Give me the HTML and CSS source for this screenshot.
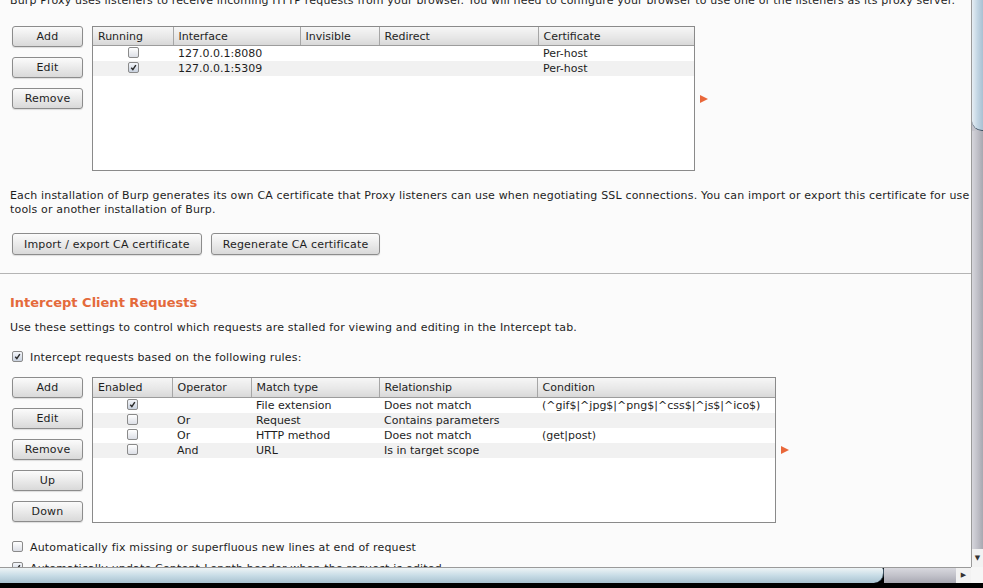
FILE: index.html
```html
<!DOCTYPE html>
<html lang="en">
<head>
    <meta charset="UTF-8">
    <title>Proxy Options</title>
    <link rel="stylesheet" href="styles.css">
</head>
<body>
    <div class="window">
        <div class="pane">
            <div class="content">
                <p class="intro">Burp Proxy uses listeners to receive incoming HTTP requests from your browser. You will need to configure your browser to use one of the listeners as its proxy server.</p>

                <div class="table-block listeners">
                    <div class="btn-col">
                        <button class="btn">Add</button>
                        <button class="btn">Edit</button>
                        <button class="btn">Remove</button>
                    </div>
                    <div class="grid-box grid-small">
                        <table class="grid">
                            <colgroup>
                                <col style="width:80px"><col style="width:127px"><col style="width:79px"><col style="width:159px"><col>
                            </colgroup>
                            <thead>
                                <tr><th>Running</th><th>Interface</th><th>Invisible</th><th>Redirect</th><th>Certificate</th></tr>
                            </thead>
                            <tbody>
                                <tr><td class="mid"><span class="check"></span></td><td>127.0.0.1:8080</td><td></td><td></td><td>Per-host</td></tr>
                                <tr class="alt"><td class="mid"><span class="check on"><svg viewBox="0 0 10 10"><path d="M2.5 5.2 L4.3 7.3 L7.6 2.3"/></svg></span></td><td>127.0.0.1:5309</td><td></td><td></td><td>Per-host</td></tr>
                            </tbody>
                        </table>
                    </div>
                    <span class="arrow"></span>
                </div>

                <p class="para">Each installation of Burp generates its own CA certificate that Proxy listeners can use when negotiating SSL connections. You can import or export this certificate for use in other tools or another installation of Burp.</p>

                <div class="btn-row">
                    <button class="btn wide">Import / export CA certificate</button>
                    <button class="btn wide">Regenerate CA certificate</button>
                </div>

                <hr class="divider">

                <h2 class="section-title">Intercept Client Requests</h2>
                <p class="line">Use these settings to control which requests are stalled for viewing and editing in the Intercept tab.</p>
                <label class="option first"><span class="check on"><svg viewBox="0 0 10 10"><path d="M2.5 5.2 L4.3 7.3 L7.6 2.3"/></svg></span>Intercept requests based on the following rules:</label>

                <div class="table-block rules">
                    <div class="btn-col">
                        <button class="btn">Add</button>
                        <button class="btn">Edit</button>
                        <button class="btn">Remove</button>
                        <button class="btn">Up</button>
                        <button class="btn">Down</button>
                    </div>
                    <div class="grid-box grid-wide">
                        <table class="grid">
                            <colgroup>
                                <col style="width:79px"><col style="width:79px"><col style="width:128px"><col style="width:158px"><col>
                            </colgroup>
                            <thead>
                                <tr><th>Enabled</th><th>Operator</th><th>Match type</th><th>Relationship</th><th>Condition</th></tr>
                            </thead>
                            <tbody>
                                <tr><td class="mid"><span class="check on"><svg viewBox="0 0 10 10"><path d="M2.5 5.2 L4.3 7.3 L7.6 2.3"/></svg></span></td><td></td><td>File extension</td><td>Does not match</td><td>(^gif$|^jpg$|^png$|^css$|^js$|^ico$)</td></tr>
                                <tr class="alt"><td class="mid"><span class="check"></span></td><td>Or</td><td>Request</td><td>Contains parameters</td><td></td></tr>
                                <tr><td class="mid"><span class="check"></span></td><td>Or</td><td>HTTP method</td><td>Does not match</td><td>(get|post)</td></tr>
                                <tr class="alt"><td class="mid"><span class="check"></span></td><td>And</td><td>URL</td><td>Is in target scope</td><td></td></tr>
                            </tbody>
                        </table>
                    </div>
                    <span class="arrow"></span>
                </div>

                <label class="option fix"><span class="check"></span>Automatically fix missing or superfluous new lines at end of request</label>
                <label class="option next"><span class="check on"><svg viewBox="0 0 10 10"><path d="M2.5 5.2 L4.3 7.3 L7.6 2.3"/></svg></span>Automatically update Content-Length header when the request is edited</label>
            </div>
        </div>

        <!-- vertical scrollbar -->
        <div class="vscroll">
            <div class="vthumb"></div>
            <div class="vtrack"></div>
            <div class="sbtn">&#9660;</div>
        </div>

        <!-- horizontal scrollbar -->
        <div class="hscroll">
            <div class="hthumb"></div>
            <div class="htrack"></div>
            <div class="sbtn hbtn">&#9654;</div>
        </div>
        <div class="corner"></div>
        <div class="bottom-edge"></div>
    </div>
</body>
</html>
```

FILE: styles.css
```css
/* Basic styling */
body {
    margin: 0;
    padding: 0;
    background-color: #000;
    font-family: "DejaVu Sans", Verdana, sans-serif;
    font-size: 11px;
    color: #1e1e1e;
}
.window {
    width: 983px;
    height: 588px;
    display: grid;
    grid-template-columns: 971px 12px;
    grid-template-rows: 567px 16px 5px;
    overflow: hidden;
}
.pane {
    background-color: #fbfbfb;
    overflow: hidden;
}
.content {
    margin-top: -7px;
    padding-left: 10px;
    width: 1100px;
}
p {
    margin: 0;
    letter-spacing: 0.17px;
}
.intro {
    line-height: 15px;
    white-space: nowrap;
}
.para {
    line-height: 14px;
    width: 1035px;
    margin-top: 18px;
}
.line {
    line-height: 15px;
    margin-top: 10px;
}

/* Button columns + tables */
.table-block {
    display: flex;
    align-items: flex-start;
}
.listeners {
    margin-top: 18px;
}
.rules {
    margin-top: 12px;
}
.btn-col {
    display: flex;
    flex-direction: column;
    gap: 10px;
    padding-left: 2px;
    margin-right: 9px;
}
.btn {
    font-family: inherit;
    font-size: 11px;
    letter-spacing: 0.17px;
    color: #1e1e1e;
    width: 71px;
    height: 21px;
    padding: 0;
    border: 1px solid #8c8c8c;
    border-radius: 3px;
    background: linear-gradient(#fbfbfb, #ececec 45%, #d9d9d9);
    box-shadow: 0 1px 1px rgba(0,0,0,0.12);
}
.btn.wide {
    width: auto;
    height: 22px;
    padding: 0 11px;
}
.btn-row {
    display: flex;
    gap: 9px;
    padding-left: 2px;
    margin-top: 16px;
}
.grid-box {
    background-color: #fff;
    border: 1px solid #8a8a8a;
    box-sizing: border-box;
}
.grid-small {
    width: 603px;
    height: 145px;
}
.grid-wide {
    width: 684px;
    height: 146px;
}
.grid {
    width: 100%;
    border-collapse: collapse;
    table-layout: fixed;
}
.grid th {
    height: 18px;
    padding: 0 5px;
    text-align: left;
    font-weight: normal;
    background: linear-gradient(#f6f6f6, #e6e6e6 60%, #d8d8d8);
    border-right: 1px solid #a6a6a6;
    border-bottom: 1px solid #9c9c9c;
}
.rules .grid th {
    height: 19px;
}
.grid th:last-child {
    border-right: none;
}
.grid td {
    height: 15px;
    padding: 0 5px;
    line-height: 15px;
    white-space: nowrap;
    overflow: hidden;
}
.grid tr.alt td {
    background-color: #f1f1f1;
}
.grid td.mid {
    text-align: center;
    padding: 0;
}
.arrow {
    align-self: center;
    width: 0;
    height: 0;
    margin-left: 5px;
    border-left: 8px solid #e9673a;
    border-top: 4px solid transparent;
    border-bottom: 4px solid transparent;
}

/* Checkboxes */
.check {
    display: inline-block;
    width: 9px;
    height: 9px;
    border: 1px solid #8a8a8a;
    border-radius: 2px;
    background: linear-gradient(#ffffff, #dcdfe6);
    vertical-align: -1px;
    position: relative;
}
.check svg {
    position: absolute;
    left: 0;
    top: 0;
    width: 9px;
    height: 9px;
}
.check svg path {
    fill: none;
    stroke: #2a2a2a;
    stroke-width: 1.6;
}
.check.on {
    background: linear-gradient(#f4f6fa, #c9d2df);
}
.option {
    display: block;
    line-height: 15px;
    padding-left: 2px;
    letter-spacing: 0.17px;
}
.option .check {
    margin-right: 7px;
}
.option.first {
    margin-top: 15px;
}
.option.fix {
    margin-top: 17px;
}
.option.next {
    margin-top: 6px;
}

.divider {
    margin: 18px 0 0 -10px;
    width: 971px;
    border: none;
    border-top: 1px solid #b4b4b4;
}
.section-title {
    margin: 20px 0 0;
    font-size: 13px;
    line-height: 18px;
    color: #e46a3b;
}
.section-title + .line {
    margin-top: 8px;
}

/* Scrollbars */
.vscroll {
    display: flex;
    flex-direction: column;
    border-left: 1px solid #9a9a9a;
    background-color: #c4c4cc;
}
.vthumb {
    height: 130px;
    background: linear-gradient(90deg, #e6eef4, #c3d6e4 50%, #a9c0d2);
    border-bottom: 1px solid #3e5363;
    border-bottom-left-radius: 10px;
}
.vtrack {
    flex: 1;
    background: linear-gradient(90deg, #d6d6dc, #c0c0c8 50%, #a8a8b0);
}
.sbtn {
    height: 18px;
    background-color: #f2f2f2;
    font-size: 7px;
    color: #333;
    text-align: center;
    line-height: 18px;
}
.hscroll {
    display: flex;
    border-top: 1px solid #9a9a9a;
}
.hthumb {
    width: 883px;
    background: linear-gradient(#eef4f6, #c8dce6 50%, #a8c2d0);
    border-right: 1px solid #3e5363;
    border-bottom-right-radius: 10px;
    border-top-right-radius: 2px;
}
.htrack {
    flex: 1;
    background: linear-gradient(#d8d8de, #c2c2ca 50%, #a8a8b2);
}
.hbtn {
    width: 15px;
    height: auto;
    line-height: 15px;
}
.corner {
    background-color: #f6f6f6;
}
.bottom-edge {
    grid-column: 1 / 3;
    background-color: #000;
}
```
